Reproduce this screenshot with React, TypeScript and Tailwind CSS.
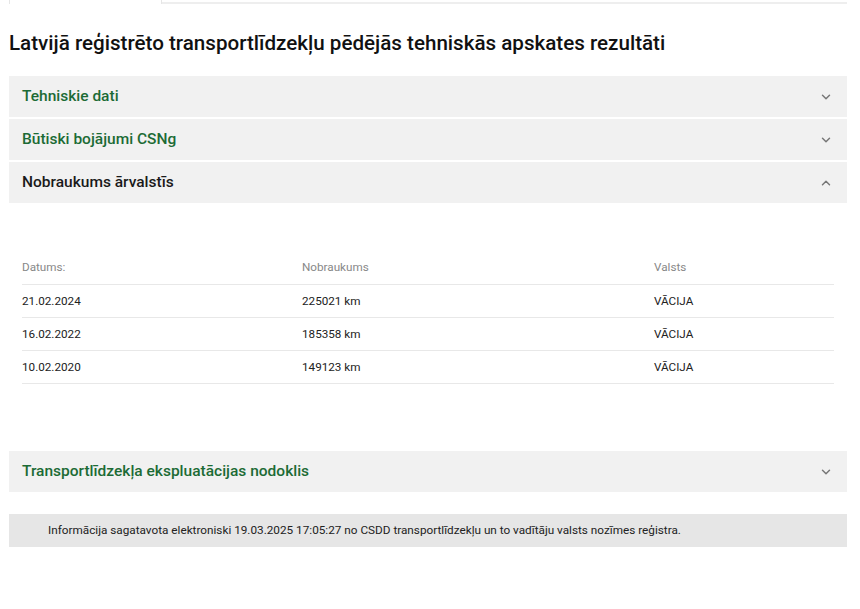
import { ChevronDown, ChevronUp } from "lucide-react";

const rows = [
  { date: "21.02.2024", km: "225021 km", country: "VĀCIJA" },
  { date: "16.02.2022", km: "185358 km", country: "VĀCIJA" },
  { date: "10.02.2020", km: "149123 km", country: "VĀCIJA" },
];

function Header({ title, open, green }: { title: string; open?: boolean; green?: boolean }) {
  return (
    <div className="flex h-[41px] items-center justify-between bg-[#f1f1f1] pl-[13px] pr-[14px]">
      <span className={`text-[15.5px] font-medium ${green ? "text-[#1c6b35]" : "text-[#1a1a1a]"}`}>{title}</span>
      {open ? (
        <ChevronUp className="size-[14px] text-[#777]" strokeWidth={2.5} />
      ) : (
        <ChevronDown className="size-[14px] text-[#777]" strokeWidth={2.5} />
      )}
    </div>
  );
}

export default function App() {
  return (
    <div className="min-h-[609px] bg-white font-['Roboto',sans-serif] text-[#1a1a1a]">
      <div className="flex h-[4px] pl-[9px] pr-[13px]">
        <div className="w-[153px] border-x border-[#e6e6e6]" />
        <div className="flex-1 border-b-2 border-[#eeeeee]" />
      </div>

      <div className="pl-[9px] pr-[13px]">
        <h1 className="mt-[27px] text-[20.6px] font-medium leading-[24px] text-[#111]">
          Latvijā reģistrēto transportlīdzekļu pēdējās tehniskās apskates rezultāti
        </h1>

        <div className="mt-[21px] flex flex-col gap-[2px]">
          <Header title="Tehniskie dati" green />
          <Header title="Būtiski bojājumi CSNg" green />
          <div>
            <Header title="Nobraukums ārvalstīs" open />
            <div className="px-[13px] pb-[65px] pt-[48px]">
              <div className="grid grid-cols-[280px_352px_1fr] border-b border-[#e8e8e8] text-[11.7px] leading-[33px] text-[#888]">
                <div>Datums:</div>
                <div>Nobraukums</div>
                <div>Valsts</div>
              </div>
              {rows.map((r) => (
                <div
                  key={r.date}
                  className="grid grid-cols-[280px_352px_1fr] border-b border-[#e8e8e8] text-[11.7px] leading-[32px] text-[#222]"
                >
                  <div>{r.date}</div>
                  <div>{r.km}</div>
                  <div>{r.country}</div>
                </div>
              ))}
            </div>
          </div>
          <Header title="Transportlīdzekļa ekspluatācijas nodoklis" green />
        </div>

        <div className="mt-[22px] flex h-[33px] items-center bg-[#e6e6e6] pl-[39px] text-[11.75px] text-[#222]">
          Informācija sagatavota elektroniski 19.03.2025 17:05:27 no CSDD transportlīdzekļu un to vadītāju valsts nozīmes reģistra.
        </div>
      </div>
    </div>
  );
}
